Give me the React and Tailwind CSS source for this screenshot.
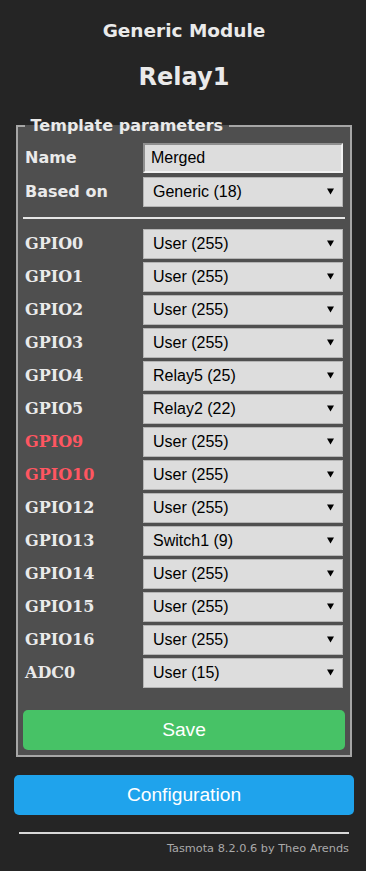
const gpios = [
  ['GPIO0', 'User (255)'],
  ['GPIO1', 'User (255)'],
  ['GPIO2', 'User (255)'],
  ['GPIO3', 'User (255)'],
  ['GPIO4', 'Relay5 (25)'],
  ['GPIO5', 'Relay2 (22)'],
  ['GPIO9', 'User (255)', true],
  ['GPIO10', 'User (255)', true],
  ['GPIO12', 'User (255)'],
  ['GPIO13', 'Switch1 (9)'],
  ['GPIO14', 'User (255)'],
  ['GPIO15', 'User (255)'],
  ['GPIO16', 'User (255)'],
  ['ADC0', 'User (15)'],
];

function Select({ value }) {
  return (
    <div className="flex h-[30px] w-[200px] items-center justify-between border border-[#b4b4b4] bg-[#dddddd] pl-[9px] pr-[8px] font-['Liberation_Sans',Arial,sans-serif] text-[16px] text-black">
      <span>{value}</span>
      <svg width="7" height="7" viewBox="0 0 7 7" className="mt-[-1px]">
        <polygon points="0,0.5 7,0.5 3.5,6.5" fill="#000" />
      </svg>
    </div>
  );
}

export default function App() {
  return (
    <div className="min-h-screen bg-[#252525] font-['DejaVu_Sans',Verdana,sans-serif] text-[#eaeaea]">
      <div className="ml-[14px] w-[340px] pt-[20px] pb-[17px]">
        <div className="text-center font-bold">
          <h3 className="text-[18.5px] leading-[22px]">Generic Module</h3>
          <h2 className="mt-[21px] text-[24px] leading-[28px]">Relay1</h2>
        </div>

        <fieldset className="mx-[2px] mt-[25px] border-2 border-[#a6a6a6] bg-[#4f4f4f] px-[5px] pb-[5px] pt-[5px]">
          <legend className="ml-[2px] text-[16px] font-bold leading-[20px]">&nbsp;Template parameters&nbsp;</legend>

          <div className="mt-[2px] flex flex-col gap-[4px] px-[2px]">
            <div className="flex items-center">
              <span className="w-[118px] text-[16px] font-bold">Name</span>
              <div className="flex h-[30px] w-[200px] items-center border-2 border-t-[#8f8f8f] border-l-[#8f8f8f] border-b-[#f2f2f2] border-r-[#f2f2f2] bg-[#dddddd] pl-[6px] font-['Liberation_Sans',Arial,sans-serif] text-[16px] text-black">
                Merged
              </div>
            </div>
            <div className="flex items-center">
              <span className="w-[118px] text-[16px] font-bold">Based on</span>
              <Select value="Generic (18)" />
            </div>
          </div>

          <div className="mt-[10px] mb-[10px] h-[2px] bg-[#e6e6e6]" />

          <div className="flex flex-col gap-[3px] px-[2px]">
            {gpios.map(([name, value, warn]) => (
              <div key={name} className="flex items-center">
                <span
                  className={`w-[118px] font-['DejaVu_Serif',Georgia,serif] text-[16px] font-bold ${
                    warn ? 'text-[#ff5661]' : 'text-[#eaeaea]'
                  }`}
                >
                  {name}
                </span>
                <Select value={value} />
              </div>
            ))}
          </div>

          <button className="mt-[22px] flex h-[40px] w-full items-center justify-center rounded-[5px] bg-[#47c266] font-['Liberation_Sans',Arial,sans-serif] text-[19.2px] text-white">
            Save
          </button>
        </fieldset>

        <button className="mt-[18px] flex h-[40px] w-full items-center justify-center rounded-[5px] bg-[#1fa3ec] font-['Liberation_Sans',Arial,sans-serif] text-[19.2px] text-white">
          Configuration
        </button>

        <div className="px-[5px] pt-[17px] text-right">
          <div className="h-[2px] bg-[#d8d8d8]" />
          <div className="mt-[8px] text-[11.3px] leading-[14px] text-[#aaaaaa]">Tasmota 8.2.0.6 by Theo Arends</div>
        </div>
      </div>
    </div>
  );
}
